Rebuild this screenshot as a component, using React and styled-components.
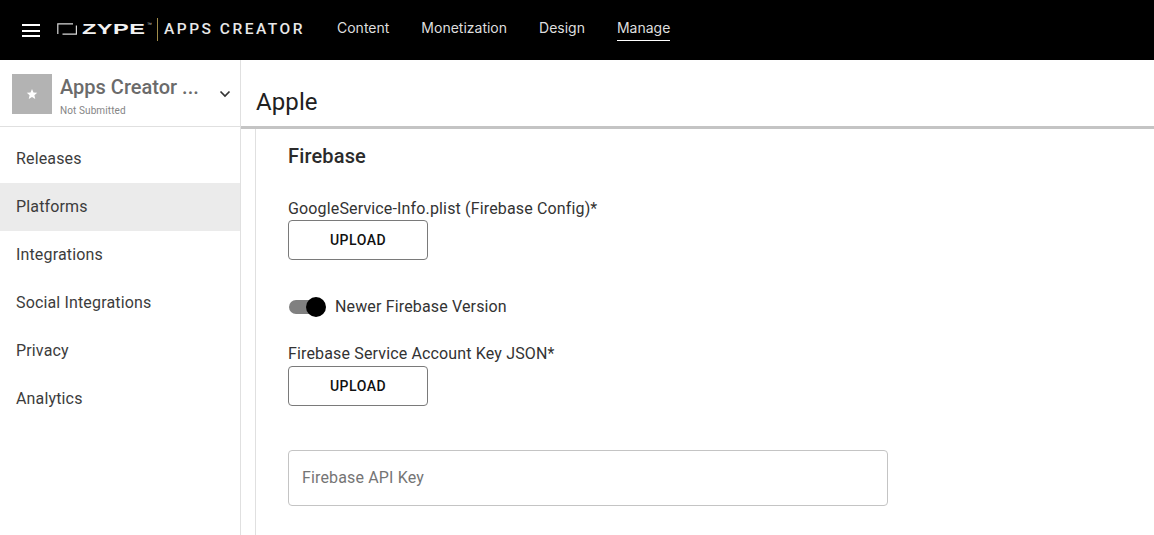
import React from 'react';
import styled, { createGlobalStyle } from 'styled-components';

const GlobalStyle = createGlobalStyle`
  html, body {
    margin: 0;
    height: 100%;
    overflow: hidden;
    background: #fff;
  }
  body {
    font-family: Roboto, "Liberation Sans", sans-serif;
    color: #212121;
  }
`;

const Page = styled.div`
  width: 1154px;
  height: 535px;
  display: flex;
  flex-direction: column;
  overflow: hidden;
`;

const TopBar = styled.header`
  height: 60px;
  flex: none;
  background: #000;
  display: flex;
  align-items: center;
  padding-left: 22px;
  box-sizing: border-box;
`;

const Burger = styled.div`
  width: 18px;
  height: 13px;
  display: flex;
  flex-direction: column;
  justify-content: space-between;
  margin-top: 1px;

  span {
    height: 2px;
    background: #fff;
  }
`;

const Logo = styled.div`
  display: flex;
  align-items: center;
  margin-left: 17px;
  width: 246px;
  flex: none;
  margin-top: -2px;

  & > * {
    flex: none;
  }
`;

const ZypeWord = styled.span`
  font-family: "Liberation Sans", sans-serif;
  font-weight: 700;
  font-size: 15.5px;
  line-height: 16px;
  color: #f2f2f2;
  display: inline-block;
  width: 65px;
  margin-left: 5px;
  transform: scaleX(1.52);
  transform-origin: left center;
  letter-spacing: 0.3px;
  white-space: nowrap;
`;

const TradeMark = styled.span`
  font-family: "Liberation Sans", sans-serif;
  font-size: 5px;
  line-height: 6px;
  color: #cfcfcf;
  align-self: flex-start;
  margin-top: 3px;
  width: 5px;
  overflow: hidden;
`;

const LogoDivider = styled.span`
  width: 1px;
  height: 23px;
  background: #a08c4a;
  margin-left: 5px;
`;

const AppsCreator = styled.span`
  font-size: 15.5px;
  font-weight: 500;
  letter-spacing: 2.5px;
  color: #e8e8e8;
  margin-left: 6px;
  white-space: nowrap;
`;

const Nav = styled.nav`
  display: flex;
  gap: 32px;
  margin-left: 34px;
  margin-top: -4px;
`;

const NavLink = styled.a`
  font-family: Inter, sans-serif;
  font-size: 14px;
  line-height: 20px;
  color: #dedede;
  padding: 3px 0 2px;
  border-bottom: 1px solid ${p => (p.$active ? '#fff' : 'transparent')};
`;

const Body = styled.div`
  flex: 1;
  display: flex;
  min-height: 0;
`;

const Sidebar = styled.aside`
  width: 241px;
  flex: none;
  box-sizing: border-box;
  border-right: 1px solid #e0e0e0;
`;

const AppPicker = styled.div`
  height: 67px;
  box-sizing: border-box;
  border-bottom: 1px solid #e0e0e0;
  padding: 14px 8px 0 12px;
  display: flex;
  align-items: flex-start;
`;

const AppThumb = styled.div`
  width: 40px;
  height: 40px;
  flex: none;
  background: #b3b3b3;
  color: #fff;
  display: flex;
  align-items: center;
  justify-content: center;
`;

const AppInfo = styled.div`
  margin-left: 8px;
  flex: 1;
  min-width: 0;
`;

const AppName = styled.div`
  font-size: 20px;
  font-weight: 500;
  line-height: 26px;
  color: #6b6b6b;
  white-space: nowrap;
`;

const AppStatus = styled.div`
  font-size: 10px;
  line-height: 14px;
  letter-spacing: 0.1px;
  color: #858585;
  margin-top: 4px;
`;

const Chevron = styled.svg`
  width: 12px;
  height: 8px;
  flex: none;
  margin-top: 16px;
  margin-right: 1px;
`;

const SideItem = styled.div`
  height: 48px;
  box-sizing: border-box;
  display: flex;
  align-items: center;
  padding: 0 0 2px 16px;
  font-size: 16px;
  letter-spacing: 0.15px;
  color: #3c3c3c;
  background: ${p => (p.$active ? '#ebebeb' : 'transparent')};
`;

const SideList = styled.div`
  padding-top: 8px;
`;

const Main = styled.main`
  flex: 1;
  min-width: 0;
  display: flex;
  flex-direction: column;
`;

const TitleBar = styled.div`
  height: 69px;
  flex: none;
  box-sizing: border-box;
  border-bottom: 3px solid #c4c4c4;
  padding: 0 0 8px 15px;
  display: flex;
  align-items: flex-end;
`;

const Title = styled.h1`
  margin: 0;
  font-size: 24px;
  font-weight: 400;
  line-height: 32px;
  color: #212121;
  letter-spacing: 0.1px;
`;

const Content = styled.div`
  flex: 1;
  margin-left: 14px;
  border-left: 1px solid #e0e0e0;
  padding: 14px 0 0 32px;
`;

const SectionTitle = styled.h2`
  margin: 0;
  font-size: 20px;
  font-weight: 500;
  line-height: 26px;
  letter-spacing: 0.15px;
  color: #2b2b2b;
`;

const FieldLabel = styled.div`
  font-size: 16px;
  line-height: 20px;
  letter-spacing: 0.15px;
  color: #333;
  margin-top: ${p => p.$top}px;
`;

const UploadButton = styled.button`
  display: block;
  width: 140px;
  height: 40px;
  margin-top: ${p => p.$top}px;
  padding: 0;
  background: #fff;
  border: 1px solid #7a7a7a;
  border-radius: 4px;
  font-family: Roboto, sans-serif;
  font-size: 14px;
  font-weight: 500;
  letter-spacing: 0.5px;
  color: #111;
`;

const SwitchRow = styled.div`
  display: flex;
  align-items: center;
  margin-top: 35px;
  height: 24px;
`;

const SwitchTrack = styled.div`
  width: 34px;
  height: 14px;
  border-radius: 7px;
  background: #808080;
  position: relative;
  margin-left: 1px;
`;

const SwitchThumb = styled.div`
  position: absolute;
  top: -3px;
  right: -3px;
  width: 20px;
  height: 20px;
  border-radius: 50%;
  background: #000;
`;

const SwitchLabel = styled.span`
  font-size: 16px;
  line-height: 20px;
  letter-spacing: 0.15px;
  color: #333;
  margin-left: 12px;
`;

const TextField = styled.div`
  width: 600px;
  height: 56px;
  box-sizing: border-box;
  margin-top: 44px;
  border: 1px solid #c4c4c4;
  border-radius: 4px;
  display: flex;
  align-items: center;
  padding: 0 0 2px 13px;
  font-size: 16px;
  letter-spacing: 0.15px;
  color: #757575;
`;

const sideItems = ['Releases', 'Platforms', 'Integrations', 'Social Integrations', 'Privacy', 'Analytics'];
const navItems = ['Content', 'Monetization', 'Design', 'Manage'];

export default function App() {
  return (
    <Page>
      <GlobalStyle />
      <TopBar>
        <Burger><span /><span /><span /></Burger>
        <Logo>
          <svg width="20" height="12" viewBox="0 0 20 12" fill="none">
            <path d="M19.4 2.5V11.2H5.5M0.8 11V0.8H16" stroke="#d9d9d9" strokeWidth="1.2" />
          </svg>
          <ZypeWord>ZYPE</ZypeWord>
          <TradeMark>™</TradeMark>
          <LogoDivider />
          <AppsCreator>APPS CREATOR</AppsCreator>
        </Logo>
        <Nav>
          {navItems.map(n => (
            <NavLink key={n} $active={n === 'Manage'}>{n}</NavLink>
          ))}
        </Nav>
      </TopBar>
      <Body>
        <Sidebar>
          <AppPicker>
            <AppThumb>
              <svg width="12" height="12" viewBox="0 0 24 24" fill="#fff">
                <path d="M12 2l3 7 7.5.7-5.7 5 1.7 7.3L12 18.2 5.5 22l1.7-7.3-5.7-5L9 9z" />
              </svg>
            </AppThumb>
            <AppInfo>
              <AppName>Apps Creator ...</AppName>
              <AppStatus>Not Submitted</AppStatus>
            </AppInfo>
            <Chevron viewBox="0 0 12 8" fill="none">
              <path d="M1.5 1.5L6 6l4.5-4.5" stroke="#333" strokeWidth="1.7" />
            </Chevron>
          </AppPicker>
          <SideList>
            {sideItems.map(s => (
              <SideItem key={s} $active={s === 'Platforms'}>{s}</SideItem>
            ))}
          </SideList>
        </Sidebar>
        <Main>
          <TitleBar>
            <Title>Apple</Title>
          </TitleBar>
          <Content>
            <SectionTitle>Firebase</SectionTitle>
            <FieldLabel $top={30}>GoogleService-Info.plist (Firebase Config)*</FieldLabel>
            <UploadButton $top={1}>UPLOAD</UploadButton>
            <SwitchRow>
              <SwitchTrack><SwitchThumb /></SwitchTrack>
              <SwitchLabel>Newer Firebase Version</SwitchLabel>
            </SwitchRow>
            <FieldLabel $top={25}>Firebase Service Account Key JSON*</FieldLabel>
            <UploadButton $top={2}>UPLOAD</UploadButton>
            <TextField>Firebase API Key</TextField>
          </Content>
        </Main>
      </Body>
    </Page>
  );
}
